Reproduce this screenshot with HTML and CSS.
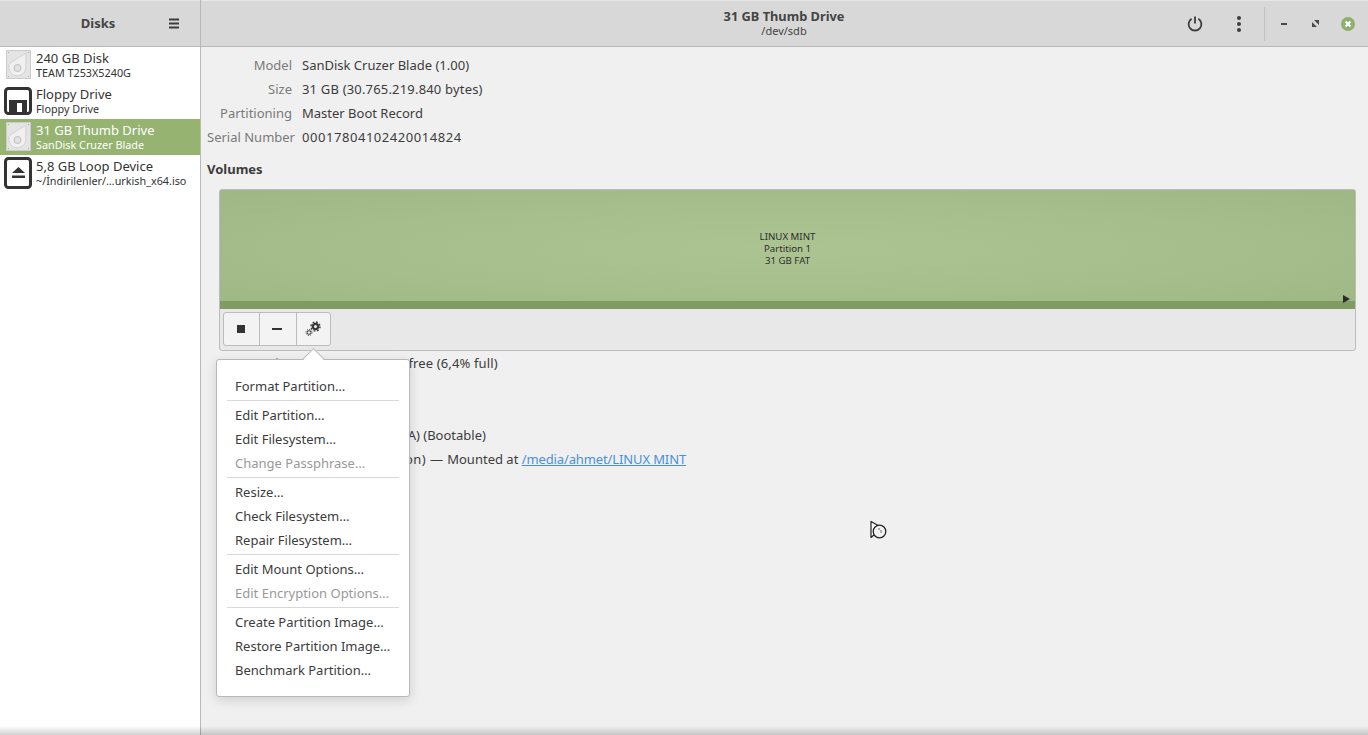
FILE: index.html
```html
<!DOCTYPE html>
<html lang="tr">
<head>
<meta charset="utf-8">
<title>Disks</title>
<link rel="stylesheet" href="styles.css">
</head>
<body>
<div class="window">
  <aside class="side">
    <header class="side-head">
      <span class="side-title">Disks</span>
      <svg class="burger" width="12" height="12" viewBox="0 0 12 12"><path d="M1 1.500h10M1 5.500h10M1 9.500h10" stroke="#3d3d3d" stroke-width="2"/></svg>
    </header>
    <ul class="devices">
      <li class="device">
        <svg class="dev-icon" width="34" height="34" viewBox="0 0 34 34"><use href="#hdd"/></svg>
        <div class="dev-text"><div class="dev-name">240 GB Disk</div><div class="dev-sub">TEAM T253X5240G</div></div>
      </li>
      <li class="device">
        <svg class="dev-icon" width="34" height="34" viewBox="0 0 34 34"><rect x="4.500" y="4.500" width="25" height="25" rx="3" fill="#fff" stroke="#333" stroke-width="3"/><path d="M8 31V16h18v15z" fill="#333"/><rect x="16" y="19" width="5" height="9" fill="#fff"/></svg>
        <div class="dev-text"><div class="dev-name">Floppy Drive</div><div class="dev-sub">Floppy Drive</div></div>
      </li>
      <li class="device selected">
        <svg class="dev-icon" width="34" height="34" viewBox="0 0 34 34"><use href="#hdd"/></svg>
        <div class="dev-text"><div class="dev-name">31 GB Thumb Drive</div><div class="dev-sub">SanDisk Cruzer Blade</div></div>
      </li>
      <li class="device">
        <svg class="dev-icon" width="34" height="34" viewBox="0 0 34 34"><rect x="4.500" y="2.500" width="25" height="29" rx="3" fill="#fff" stroke="#333" stroke-width="3"/><path d="M17.500 11l6.500 6H11z" fill="#333"/><rect x="11" y="19.500" width="13" height="2.500" fill="#333"/></svg>
        <div class="dev-text"><div class="dev-name">5,8 GB Loop Device</div><div class="dev-sub">~/İndirilenler/…urkish_x64.iso</div></div>
      </li>
    </ul>
  </aside>
  <main class="content">
    <header class="top">
      <div class="top-title"><div class="t1">31 GB Thumb Drive</div><div class="t2">/dev/sdb</div></div>
      <div class="top-actions">
        <svg width="18" height="18" viewBox="0 0 18 18" class="act-power"><path d="M5.600 3.700A6.400 6.400 0 1 0 12.400 3.700M9 1.500V8.500" fill="none" stroke="#3d3d3d" stroke-width="1.800"/></svg>
        <svg width="6" height="18" viewBox="0 0 6 18" class="act-dots"><circle cx="3" cy="3" r="2" fill="#3d3d3d"/><circle cx="3" cy="9" r="2" fill="#3d3d3d"/><circle cx="3" cy="15" r="2" fill="#3d3d3d"/></svg>
        <span class="act-sep"></span>
        <svg width="8" height="4" viewBox="0 0 8 4" class="act-min"><rect y="1" width="6" height="2" fill="#4a4a4a"/></svg>
        <svg width="8" height="8" viewBox="0 0 8 8" class="act-max"><path d="M0 7V2L5 7zM7 0V5L2 0z" fill="#4a4a4a"/></svg>
        <svg width="14" height="14" viewBox="0 0 14 14" class="act-close"><circle cx="7" cy="7" r="7" fill="#8fb06d"/><path d="M4.500 4.500l5 5M9.500 4.500l-5 5" stroke="#fff" stroke-width="2"/></svg>
      </div>
    </header>
    <div class="body">
      <dl class="info">
        <dt>Model</dt><dd>SanDisk Cruzer Blade (1.00)</dd>
        <dt>Size</dt><dd class="sp-size">31 GB (30.765.219.840 bytes)</dd>
        <dt>Partitioning</dt><dd>Master Boot Record</dd>
        <dt>Serial Number</dt><dd class="sp-serial">00017804102420014824</dd>
      </dl>
      <h2 class="volumes">Volumes</h2>
      <section class="vol-box">
        <div class="partition">
          <div class="part-label">LINUX MINT<br>Partition 1<br>31 GB FAT</div>
          <div class="usage"><span class="play"></span></div>
        </div>
        <div class="vol-tools">
          <div class="btn-group">
            <button class="tool t-a"><svg width="10" height="10" viewBox="0 0 10 10"><rect x="1" y="1" width="8" height="8" fill="#333"/></svg></button>
            <button class="tool t-b"><svg width="12" height="10" viewBox="0 0 12 10"><rect x="1" y="4" width="10" height="2" fill="#333"/></svg></button>
            <button class="tool t-c"><svg width="16" height="16" viewBox="0 0 16 16"><g fill="none" stroke="#3a3a3a"><circle cx="10.500" cy="5.500" r="2.600" stroke-width="2.200"/><circle cx="10.500" cy="5.500" r="4.500" stroke-width="1.400" stroke-dasharray="1.800 1.730"/><circle cx="4" cy="11.500" r="1.800" stroke-width="1"/><circle cx="4" cy="11.500" r="3" stroke-width="1" stroke-dasharray="1.200 1.150"/></g></svg></button>
          </div>
        </div>
      </section>
      <dl class="info details">
        <dt>Size</dt><dd>31 GB — 28,8 GB <span class="sp-free">free (6,4% full)</span></dd>
        <dt>Device</dt><dd>/dev/sdb1</dd>
        <dt>UUID</dt><dd>1234-ABCD</dd>
        <dt>Type</dt><dd><span class="sp-wide">W95 FAT32 (L</span>BA) (Bootable)</dd>
        <dt>Contents</dt><dd><span class="sp-mid">FAT (32-bit version) — </span>Mounted at <a class="sp-link" href="#">/media/ahmet/LINUX MINT</a></dd>
      </dl>
    </div>
  </main>
  <div class="popover">
    <span class="arrow"></span>
    <div class="menu-item">Format Partition…</div>
    <hr>
    <div class="menu-item">Edit Partition…</div>
    <div class="menu-item">Edit Filesystem…</div>
    <div class="menu-item off">Change Passphrase…</div>
    <hr>
    <div class="menu-item">Resize…</div>
    <div class="menu-item">Check Filesystem…</div>
    <div class="menu-item">Repair Filesystem…</div>
    <hr>
    <div class="menu-item">Edit Mount Options…</div>
    <div class="menu-item off">Edit Encryption Options…</div>
    <hr>
    <div class="menu-item">Create Partition Image…</div>
    <div class="menu-item">Restore Partition Image…</div>
    <div class="menu-item">Benchmark Partition…</div>
  </div>
  <svg class="cursor" width="20" height="22" viewBox="0 0 20 22"><path d="M2 1.500V17.500L6 14L10 6z" fill="#fff" stroke="#222" stroke-width="1.200" stroke-linejoin="round"/><circle cx="10.500" cy="11.500" r="6.300" fill="#f2f2f2" stroke="#222" stroke-width="1.300"/><path d="M10 8v2M12 10v3" stroke="#888" stroke-width="1.300"/></svg>
  <div class="bottom-shade"></div>
</div>
<svg width="0" height="0" class="defs">
  <defs>
    <g id="hdd">
      <rect x="5.500" y="2.500" width="24" height="28" fill="#e4e4e4" stroke="#cbcbcb"/>
      <path d="M25 5L24.800 19A8.500 8.500 0 1 1 9 15z" fill="#f0f0f0" stroke="#d2d2d2"/>
      <circle cx="16.500" cy="20" r="3.500" fill="#e2e2e2" stroke="#bdbdbd"/>
      <g fill="#a8a8a8"><rect x="7" y="4" width="1" height="1"/><rect x="27" y="4" width="1" height="1"/><rect x="7" y="28" width="1" height="1"/><rect x="27" y="28" width="1" height="1"/></g>
    </g>
  </defs>
</svg>
</body>
</html>
```
FILE: styles.css
```css
* { box-sizing: border-box; }
html, body { margin: 0; height: 100%; overflow: hidden; }
body { font-family: "Noto Sans", "Open Sans", sans-serif; font-size: 13px; color: #3c3c3c; background: #f0f0f0; }
.defs { position: absolute; }
.window { position: relative; display: flex; width: 1368px; height: 735px; overflow: hidden; }

.side { flex: 0 0 201px; background: #fff; border-right: 1px solid #b8b8b8; display: flex; flex-direction: column; }
.side-head { height: 47px; background: #d8d8d8; border-top: 1px solid #e6e6e6; border-bottom: 1px solid #b8b8b8; position: relative; display: flex; align-items: center; justify-content: center; padding: 0 4px 2px 0; }
.side-title { font-weight: 700; font-size: 13px; color: #444; }
.burger { position: absolute; left: 168px; top: 17px; }
.devices { list-style: none; margin: 0; padding: 0; }
.device { height: 36px; display: flex; align-items: center; color: #333; }
.device.selected { background: #96b372; color: #fff; }
.dev-icon { flex: 0 0 34px; margin-left: 1px; }
.dev-text { margin-left: 1px; }
.dev-name { font-size: 13px; line-height: 16px; }
.dev-sub { font-size: 10.800px; line-height: 14px; }

.content { flex: 1; display: flex; flex-direction: column; min-width: 0; }
.top { height: 47px; flex: none; background: #d8d8d8; border-top: 1px solid #e6e6e6; border-bottom: 1px solid #b8b8b8; position: relative; display: flex; justify-content: center; align-items: center; padding: 0 201px 0 200px; }
.top-title { text-align: center; }
.t1 { font-weight: 700; font-size: 12.800px; line-height: 15px; color: #444; }
.t2 { font-size: 11px; line-height: 14px; color: #444; }
.top-actions { position: absolute; top: 5px; left: 985px; right: 0; height: 35px; display: flex; align-items: center; }
.act-dots { margin-left: 32px; }
.act-sep { width: 1px; height: 34px; background: #c2c2c2; margin-left: 22px; }
.act-min { margin-left: 16px; }
.act-max { margin-left: 23px; }
.act-close { margin-left: 21px; }

.body { padding: 6px 12px 0 6px; }
.info { display: grid; grid-template-columns: 85px 1fr; column-gap: 10px; margin: 0; }
.info dt { text-align: right; color: #7a7a7a; line-height: 24px; height: 24px; white-space: nowrap; }
.info dd { margin: 0; line-height: 24px; height: 24px; white-space: nowrap; color: #3c3c3c; }
.sp-size { letter-spacing: .18px; }
.sp-serial { letter-spacing: .55px; }
.sp-free { letter-spacing: .13px; }
.sp-wide { letter-spacing: 1.400px; }
.sp-mid { letter-spacing: .43px; }
.sp-link { letter-spacing: -.12px; }
.volumes { margin: 8px 0 0; font-size: 13px; font-weight: 700; line-height: 24px; color: #3c3c3c; }
.vol-box { margin: 8px 0 0 12px; height: 162px; border: 1px solid #bcbcbc; border-radius: 3px; background: #e8e8e8; display: flex; flex-direction: column; }
.partition { height: 119px; flex: none; background: radial-gradient(ellipse at 50% 50%, #acc392 0%, #a6be8c 55%, #9fb784 100%); position: relative; display: flex; flex-direction: column; }
.part-label { flex: 1; display: flex; align-items: center; justify-content: center; text-align: center; font-size: 9.700px; line-height: 12px; color: #2e2e2e; padding-top: 6px; }
.usage { height: 8px; background: #7f9c62; position: relative; flex: none; }
.play { position: absolute; right: 5px; top: -6px; border-left: 7px solid #2a2a2a; border-top: 4px solid transparent; border-bottom: 4px solid transparent; }
.vol-tools { padding: 3px; }
.btn-group { display: inline-flex; border: 1px solid #bcbcbc; border-radius: 3px; background: #f3f3f3; height: 34px; }
.tool { border: 0; border-left: 1px solid #bcbcbc; background: transparent; padding: 0 2px 0 0; display: flex; align-items: center; justify-content: center; }
.t-a { border-left: 0; width: 35px; }
.t-b { width: 37px; }
.t-c { width: 34px; }
.details { margin-top: 0; }

a { color: #4a90d9; }

.popover { position: absolute; left: 216px; top: 359px; width: 194px; height: 338px; background: #fff; border: 1px solid #b8b8b8; border-radius: 3px; box-shadow: 0 3px 12px rgba(0,0,0,.14); padding: 14px 10px 0; }
.arrow { position: absolute; left: 88.500px; top: -9.500px; width: 15px; height: 15px; background: #fff; border-left: 1px solid #b8b8b8; border-top: 1px solid #b8b8b8; transform: rotate(45deg); }
.menu-item { height: 24px; line-height: 24px; padding-left: 8px; color: #3c3c3c; white-space: nowrap; position: relative; }
.menu-item.off { color: #999; }
.popover hr { height: 1px; border: 0; background: #d8d8d8; margin: 2px 0; }

.cursor { position: absolute; left: 869px; top: 520px; }
.bottom-shade { position: absolute; left: 0; right: 0; bottom: 0; height: 9px; background: linear-gradient(to bottom, rgba(0,0,0,0), rgba(0,0,0,.18)); pointer-events: none; }
```
